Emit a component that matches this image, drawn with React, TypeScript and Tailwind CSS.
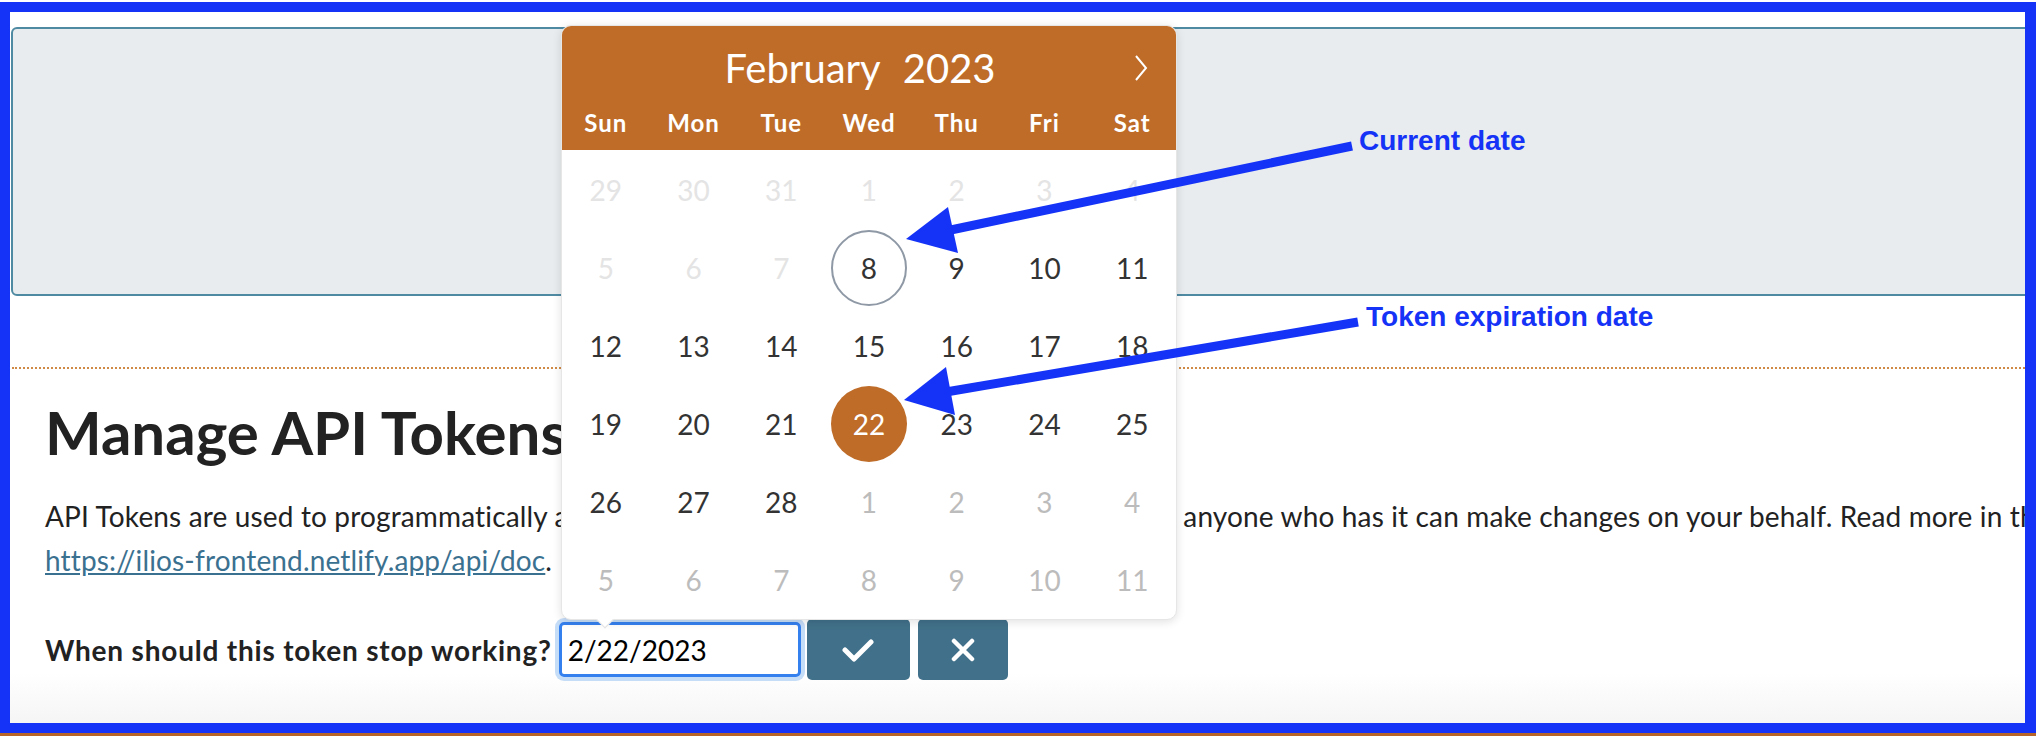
import { useMemo } from "react";

type DayKind = "past" | "cur" | "next" | "today" | "selected";
type Day = { n: number; kind: DayKind };

const weekDays = ["Sun", "Mon", "Tue", "Wed", "Thu", "Fri", "Sat"];

function buildDays(): Day[] {
  const out: Day[] = [];
  [29, 30, 31].forEach((n) => out.push({ n, kind: "past" }));
  for (let n = 1; n <= 7; n++) out.push({ n, kind: "past" });
  for (let n = 8; n <= 28; n++) {
    out.push({ n, kind: n === 8 ? "today" : n === 22 ? "selected" : "cur" });
  }
  for (let n = 1; n <= 11; n++) out.push({ n, kind: "next" });
  return out;
}

function DayCell({ day }: { day: Day }) {
  let cls = "text-[#333]";
  if (day.kind === "past") cls = "text-[#e4e4e4]";
  if (day.kind === "next") cls = "text-[#bcbcbc]";
  if (day.kind === "today") cls = "text-[#333] border-2 border-[#8f99a6]";
  if (day.kind === "selected") cls = "text-white bg-[#be6c28]";
  return (
    <div className="h-[78px] flex items-center justify-center">
      <span className={`w-[76px] h-[76px] rounded-full flex items-center justify-center text-[28px] ${cls}`}>
        {day.n}
      </span>
    </div>
  );
}

function Calendar() {
  const days = useMemo(buildDays, []);
  return (
    <div className="absolute left-[561px] top-[25px] w-[616px]">
      <div className="rounded-[10px] overflow-hidden bg-white shadow-[0_2px_10px_rgba(0,0,0,0.12)] border border-[#e6e6e6]">
        <div className="bg-[#be6c28] h-[124px] text-white relative">
          <div className="h-[84px] flex items-center justify-center gap-[22px] text-[40px] pr-[18px]">
            <span>February</span>
            <span>2023</span>
          </div>
          <svg className="absolute right-[28px] top-[28px]" width="14" height="28" viewBox="0 0 14 28">
            <polyline points="2,2 12,14 2,26" fill="none" stroke="white" strokeWidth="2" />
          </svg>
          <div className="-mt-[5px] grid grid-cols-7 h-[28px] items-center text-[24px] tracking-[1px] font-bold">
            {weekDays.map((d) => (
              <div key={d} className="text-center">{d}</div>
            ))}
          </div>
        </div>
        <div className="grid grid-cols-7 pt-px">
          {days.map((d, i) => (
            <DayCell key={i} day={d} />
          ))}
        </div>
      </div>
      <div className="absolute left-[38px] -bottom-[6px] w-[12px] h-[12px] bg-white rotate-45 border-r border-b border-[#e2e2e2]" />
    </div>
  );
}

function Annotations() {
  return (
    <>
      <svg className="absolute inset-0 pointer-events-none" width="2036" height="736" viewBox="0 0 2036 736">
        <line x1="1352" y1="146" x2="946" y2="231" stroke="#1533f6" strokeWidth="9" />
        <polygon points="906,239 948,207 958,253" fill="#1533f6" />
        <line x1="1358" y1="322" x2="946" y2="392" stroke="#1533f6" strokeWidth="9" />
        <polygon points="904,400 946,367 955,415" fill="#1533f6" />
      </svg>
      <span className="absolute left-[1359px] top-[127px] text-[28px] leading-[28px] font-bold text-[#1533f6] font-['Liberation_Sans',Arial,sans-serif]">
        Current date
      </span>
      <span className="absolute left-[1366px] top-[303px] text-[28px] leading-[28px] font-bold text-[#1533f6] font-['Liberation_Sans',Arial,sans-serif]">
        Token expiration date
      </span>
    </>
  );
}

export default function App() {
  return (
    <div className="relative w-[2036px] h-[736px] overflow-hidden bg-white pt-[2px] border-b-[3px] border-[#b8652a] font-['Lato',sans-serif]">
      <div className="h-[731px] border-[10px] border-r-[11px] border-[#1533f6] overflow-hidden bg-linear-to-b from-white from-[93%] to-[#f5f5f5]">
        <div className="ml-px mt-[15px] w-[2100px] h-[269px] rounded-md border-2 border-[#4f8aa3] bg-[#e8ecee]" />
        <div className="mt-[71px] ml-[2px] w-[2100px] border-t-2 border-dotted border-[#d08a46]" />
        <div className="ml-[35px] text-[#222]">
          <h1 className="mt-[33px] text-[60px] leading-[60px] font-bold">Manage API Tokens</h1>
          <p className="mt-[32px] text-[28px] leading-[44px] tracking-[0.15px] whitespace-nowrap">
            API Tokens are used to programmatically access Ilios data. Keep yours secret and safe, since anyone who has it can make changes on your behalf. Read more in the API documentation at
            <br />
            <a className="text-[#3b7190] underline" href="#">https://ilios-frontend.netlify.app/api/doc</a>.
          </p>
          <div className="mt-[37px] flex items-center h-[61px]">
            <label className="text-[28px] font-bold tracking-[0.8px] mr-[7px]">When should this token stop working?</label>
            <input
              readOnly
              value="2/22/2023"
              className="w-[242px] h-[55px] border-[3px] border-[#3580ef] rounded-[5px] shadow-[0_0_0_4px_#c6ddf8] pl-[6px] text-[28px] text-black outline-none"
            />
            <button className="ml-[6px] w-[103px] h-[61px] rounded-[5px] bg-[#41718a] flex items-center justify-center">
              <svg width="32" height="24" viewBox="0 0 32 24">
                <polyline points="3,12 12,21 29,4" fill="none" stroke="white" strokeWidth="5" strokeLinecap="round" strokeLinejoin="round" />
              </svg>
            </button>
            <button className="ml-[8px] w-[90px] h-[61px] rounded-[5px] bg-[#41718a] flex items-center justify-center">
              <svg width="24" height="24" viewBox="0 0 24 24">
                <path d="M3 3 L21 21 M21 3 L3 21" fill="none" stroke="white" strokeWidth="4.5" strokeLinecap="round" />
              </svg>
            </button>
          </div>
        </div>
      </div>
      <Calendar />
      <Annotations />
    </div>
  );
}
